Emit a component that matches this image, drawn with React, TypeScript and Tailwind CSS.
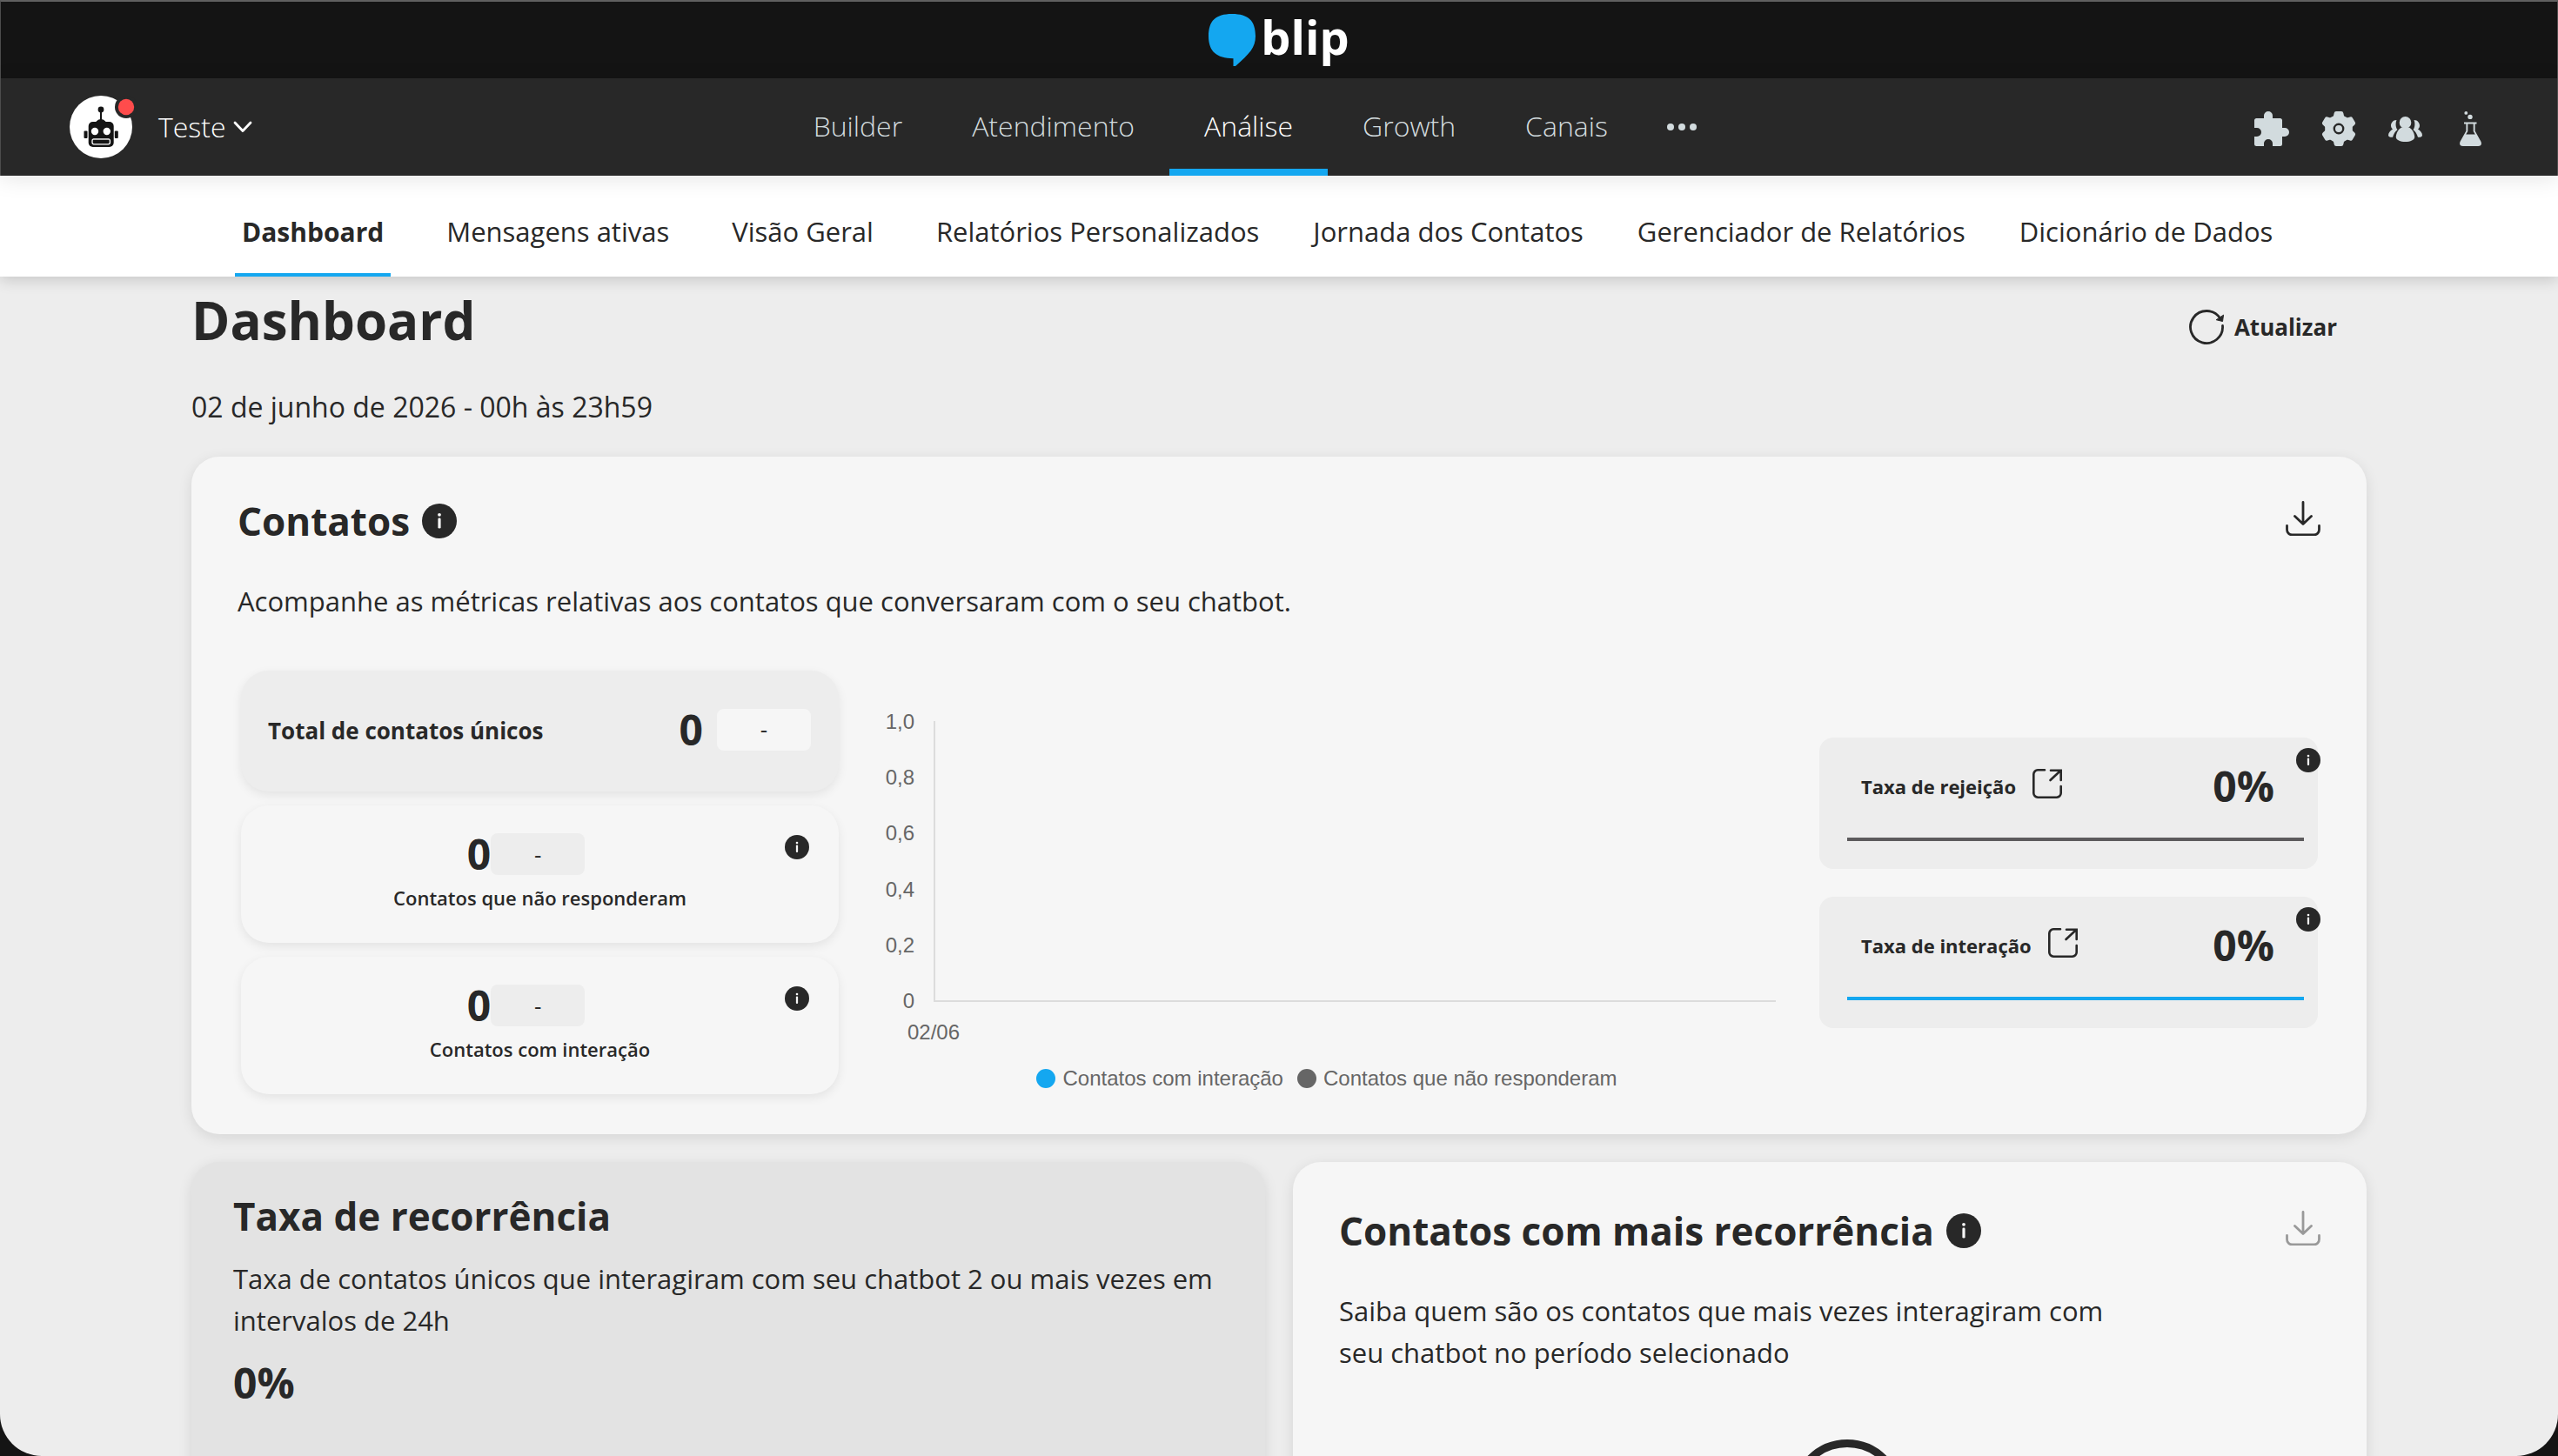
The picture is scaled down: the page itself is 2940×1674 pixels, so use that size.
import { useState } from "react";
import type { ReactNode } from "react";

const sections = ["Builder", "Atendimento", "Análise", "Growth", "Canais"];

const tabs = [
  { label: "Dashboard", space: "mr-2.5" },
  { label: "Mensagens ativas", space: "mr-2.5" },
  { label: "Visão Geral", space: "mr-2.5" },
  { label: "Relatórios Personalizados", space: "" },
  { label: "Jornada dos Contatos", space: "" },
  { label: "Gerenciador de Relatórios", space: "" },
  { label: "Dicionário de Dados", space: "" },
];

const ticks = ["1,0", "0,8", "0,6", "0,4", "0,2", "0"];

function InfoIcon({ className }: { className: string }) {
  return (
    <button aria-label="Informações" className={className}>
      <svg viewBox="0 0 40 40" className="w-full h-full">
        <circle cx="20" cy="20" r="20" fill="#282828" />
        <circle cx="20" cy="12.8" r="1.9" fill="#f6f6f6" />
        <rect x="18.4" y="16.6" width="3.2" height="12" rx="1.4" fill="#f6f6f6" />
      </svg>
    </button>
  );
}

function DownloadIcon({ className }: { className: string }) {
  return (
    <button aria-label="Baixar" className={className}>
      <svg viewBox="0 0 40 40" className="w-full h-full" fill="none" stroke="currentColor" strokeWidth="2.8" strokeLinecap="round" strokeLinejoin="round">
        <path d="M20 1.5V26M10.5 17.5 20 26.5l9.5-9M1.5 28.5v4.5a6 6 0 0 0 6 6h25a6 6 0 0 0 6-6v-4.5" />
      </svg>
    </button>
  );
}

function ExternalIcon() {
  return (
    <svg viewBox="0 0 34 34" className="w-[34px] h-[34px]" fill="none" stroke="#282828" strokeWidth="2.6" strokeLinecap="round">
      <path d="M14 1.3H6.5A5 5 0 0 0 1.3 6.5v21a5 5 0 0 0 5.2 5.2h21a5 5 0 0 0 5.2-5.2V20" />
      <path d="M21 1.8h11.7V13M32 2.2 20.5 13" />
    </svg>
  );
}

function RobotAvatar() {
  return (
    <svg viewBox="0 0 80 72" className="w-20 h-[72px]">
      <circle cx="36" cy="36" r="36" fill="#fff" />
      <g fill="#141414">
        <circle cx="36" cy="16" r="3.4" />
        <rect x="35" y="17" width="2" height="12" />
        <path d="M29 31c2-1 3-4 7-4s5 3 7 4z" />
        <rect x="21.7" y="30" width="29" height="29" rx="5" />
        <rect x="16.5" y="40.5" width="4" height="8.6" rx="1" />
        <rect x="51.8" y="40.5" width="4" height="8.6" rx="1" />
      </g>
      <circle cx="29" cy="41" r="4.2" fill="#fff" />
      <circle cx="42.8" cy="41" r="4.2" fill="#fff" />
      <rect x="26" y="49.8" width="20.4" height="6" rx="2" fill="#141414" stroke="#fff" strokeWidth="1.3" />
      <path d="M27 50h18.4" stroke="#bdbdbd" strokeWidth="1.4" />
      <circle cx="65" cy="13" r="13" fill="#282828" />
      <circle cx="65" cy="13" r="9.2" fill="#ff4c4c" />
    </svg>
  );
}

function PuzzleIcon() {
  return (
    <svg viewBox="0 0 40 40" className="w-10 h-10" fill="currentColor">
      <path d="M2.5 8H11V5a5 5 0 0 1 10 0v3h8.5Q32 8 32 10.5V19h3a5 5 0 0 1 0 10h-3v8.5Q32 40 29.5 40H21v-3a5 5 0 0 0-10 0v3H2.5Q0 40 0 37.5V29h3a5 5 0 0 0 0-10H0v-8.5Q0 8 2.5 8Z" />
    </svg>
  );
}

function GearIcon() {
  return (
    <svg viewBox="0 0 40 40" className="w-10 h-10" fill="currentColor">
      <circle cx="20" cy="20" r="15.8" />
      {[0, 60, 120, 180, 240, 300].map((a) => (
        <path key={a} d="M17 0h6q2 0 2.3 2l.8 3.5 2.5 2.5H11.4l2.5-2.5.8-3.5Q15 0 17 0Z" transform={`rotate(${a} 20 20)`} />
      ))}
      <circle cx="20" cy="20" r="5.2" fill="none" stroke="#282828" strokeWidth="2.4" />
    </svg>
  );
}

function PeopleIcon() {
  const side = "M9.5 4C5 4 3 7.5 3 10.5c0 2 1 3.3 2 4C2 16 0 19 0 21.5c0 1.6 2 2.5 5 2.3 1-3.8 3-6.8 5.5-8.6C8 12 8.3 7 9.5 4Z";
  return (
    <svg viewBox="0 0 39 29" className="w-[39px] h-[29px]" fill="currentColor">
      <path d={side} />
      <path d={side} transform="matrix(-1 0 0 1 39 0)" />
      <ellipse cx="19.5" cy="6.9" rx="6.8" ry="6.9" />
      <path d="M15 12.5h9c3.5 2 6.2 7 6.2 11 0 3.6-5 5.5-10.7 5.5S8.8 27.1 8.8 23.5c0-4 2.7-9 6.2-11Z" />
    </svg>
  );
}

function FlaskIcon() {
  return (
    <svg viewBox="0 0 25 40" className="w-[25px] h-10" fill="currentColor">
      <circle cx="7.3" cy="1.9" r="1.9" />
      <circle cx="12" cy="6.4" r="2.7" />
      <path fillRule="evenodd" d="M5 12.6h14.5V14.4H17.6v8l6.7 12.2c1.5 3 .3 5.4-3 5.4H3.7c-3.3 0-4.5-2.4-3-5.4L7.4 22.4v-8H5ZM9.3 14.4v8.6L7.2 26.4h10.6L15.7 23v-8.6Z" />
    </svg>
  );
}

function Card({ className, children }: { className: string; children: ReactNode }) {
  return (
    <section className={`rounded-[32px] shadow-[0_4px_16px_rgba(0,0,0,0.1)] ${className}`}>
      {children}
    </section>
  );
}

function Badge({ className }: { className: string }) {
  return (
    <span className={`w-[108px] h-12 rounded-lg flex items-center justify-center text-[26px] font-medium ${className}`}>
      -
    </span>
  );
}

function Stat({ label }: { label: string }) {
  return (
    <div className="relative h-[158px] pt-8 rounded-[32px] bg-[#f6f6f6] shadow-[0_4px_12px_rgba(0,0,0,0.08)]">
      <div className="flex items-center justify-center pr-8">
        <span className="text-[48px] leading-12 font-bold">0</span>
        <Badge className="bg-[#ededed]" />
      </div>
      <p className="mt-2.5 text-center text-[22px] leading-8 font-semibold">{label}</p>
      <InfoIcon className="absolute top-[34px] right-[34px] w-7 h-7" />
    </div>
  );
}

function Rate({ label, line }: { label: string; line: string }) {
  return (
    <div className="relative pt-7 pb-8 rounded-2xl bg-[#ededed]">
      <div className="flex items-center h-14 pl-12 pr-[50px]">
        <a href="#" className="flex items-start gap-[19px] text-[22px] leading-10 font-bold">
          {label}
          <ExternalIcon />
        </a>
        <span className="ml-auto text-[48px] leading-14 font-bold">0%</span>
      </div>
      <div className={`mt-[31px] ml-8 mr-4 h-1 ${line}`} />
      <InfoIcon className="absolute top-3 -right-[3px] w-7 h-7" />
    </div>
  );
}

export default function App() {
  const [section, setSection] = useState("Análise");
  const [tab, setTab] = useState("Dashboard");

  return (
    <div className="h-screen overflow-hidden bg-[#141414] font-['Open_Sans',sans-serif] text-[#282828]">
      <div className="h-full overflow-hidden rounded-b-[48px] bg-[#ededed]">
        {/* Brand bar */}
        <header className="h-[90px] flex justify-center bg-[#141414] border-t-2 border-x border-t-[#606060] border-x-[#4d4d4d]">
          <a href="#" className="flex items-start gap-1.5 pt-3.5">
            <svg viewBox="0 0 54 60" className="w-[54px] h-[60px]">
              <path d="M27 0C46 0 54 8 54 25.5 54 38.5 47 46 31 60h-2.5v-8.8C9 51 0 43 0 25.5 0 8 8 0 27 0Z" fill="#14a7f0" />
            </svg>
            <span className="text-[54px] leading-13 font-bold text-white">blip</span>
          </a>
        </header>

        {/* Main navigation */}
        <nav className="relative z-20 h-28 flex justify-between pl-[79px] pr-[87px] bg-[#282828] border-x border-[#4d4d4d] text-[32px] font-light shadow-[0_4px_24px_rgba(0,0,0,0.1)]">
          <button className="flex items-center text-white">
            <RobotAvatar />
            <span className="ml-[22px] mr-2">Teste</span>
            <svg viewBox="0 0 22 14" className="w-[22px] h-3.5" fill="none" stroke="currentColor" strokeWidth="2.8" strokeLinecap="round" strokeLinejoin="round">
              <path d="M2 2l9 9.5L20 2" />
            </svg>
          </button>
          <div className="flex">
            {sections.map((s) => (
              <a
                key={s}
                href="#"
                onClick={() => setSection(s)}
                className={`flex items-center px-10 pb-0.5 border-b-8 pt-2 ${
                  section === s ? "border-[#14a7f0] text-white" : "border-transparent text-[#d2dbde]"
                }`}
              >
                {s}
              </a>
            ))}
            <button aria-label="Mais" className="pl-7 pr-9 text-[#d2dbde]">
              <svg viewBox="0 0 34 8" className="w-[34px] h-2" fill="currentColor">
                <circle cx="4" cy="4" r="4" />
                <circle cx="17" cy="4" r="4" />
                <circle cx="30" cy="4" r="4" />
              </svg>
            </button>
          </div>
          <div className="flex items-center gap-[37px] pt-1 text-[#d2dbde]">
            <button aria-label="Extensões"><PuzzleIcon /></button>
            <button aria-label="Configurações"><GearIcon /></button>
            <button aria-label="Equipe"><PeopleIcon /></button>
            <button aria-label="Laboratório" className="ml-1.5"><FlaskIcon /></button>
          </div>
        </nav>

        {/* Analysis tabs */}
        <nav className="relative z-10 h-[116px] flex gap-[46px] pl-[270px] bg-white text-[31px] shadow-[0_4px_16px_rgba(0,0,0,0.16)]">
          {tabs.map((t) => (
            <a
              key={t.label}
              href="#"
              onClick={() => setTab(t.label)}
              className={`flex items-center px-2 pt-4 border-b-4 whitespace-nowrap ${t.space} ${
                tab === t.label ? "border-[#14a7f0] text-[30px] font-bold" : "border-transparent"
              }`}
            >
              {t.label}
            </a>
          ))}
        </nav>

        <main className="px-[220px] pt-2.5">
          <div className="flex items-start justify-between pr-[34px]">
            <h1 className="text-[60px] leading-20 font-bold">Dashboard</h1>
            <button className="mt-2 h-20 flex items-center gap-3 text-[26px] font-bold">
              <svg viewBox="0 0 40 40" className="w-10 h-10" fill="none" stroke="currentColor" strokeWidth="2.8" strokeLinecap="round">
                <path d="M38.5 18.5A18.5 18.5 0 1 1 35.5 9.8" />
                <path d="M39.5 6.5 38.5 13.5 31.5 11.8Z" fill="currentColor" strokeWidth="1" strokeLinejoin="round" />
              </svg>
              Atualizar
            </button>
          </div>
          <p className="mt-7 text-[32px] leading-12">02 de junho de 2026 - 00h às 23h59</p>

          {/* Contacts */}
          <Card className="mt-[33px] px-[53px] py-[46px] bg-[#f6f6f6]">
            <div className="flex items-start justify-between">
              <div className="flex items-center gap-3.5">
                <h2 className="text-[44px] leading-14 font-bold">Contatos</h2>
                <InfoIcon className="w-10 h-10" />
              </div>
              <DownloadIcon className="mt-[5px] w-10 h-10" />
            </div>
            <p className="mt-10 text-[31px] leading-12">
              Acompanhe as métricas relativas aos contatos que conversaram com o seu chatbot.
            </p>

            <div className="mt-14 flex pl-1 pr-[3px]">
              <div className="w-[687px] flex flex-col gap-4">
                <div className="h-[139px] flex items-center pl-[31px] pr-8 pb-1 rounded-[32px] bg-[#ededed] shadow-[0_4px_12px_rgba(0,0,0,0.08)]">
                  <span className="pt-1 text-[26px] font-bold">Total de contatos únicos</span>
                  <span className="ml-auto mr-4 text-[48px] leading-12 font-bold">0</span>
                  <Badge className="bg-[#f6f6f6]" />
                </div>
                <Stat label="Contatos que não responderam" />
                <Stat label="Contatos com interação" />
              </div>

              {/* Chart */}
              <div className="flex-1 ml-[51px] mr-[50px] pt-[47px] font-['Liberation_Sans',sans-serif] text-2xl leading-6 text-[#666]">
                <div className="flex gap-[22px] h-[345px]">
                  <div className="w-9 flex flex-col justify-between text-right">
                    {ticks.map((t) => (
                      <span key={t}>{t}</span>
                    ))}
                  </div>
                  <div className="flex-1 my-[11px] border-l-2 border-b-2 border-[#dcdcdc]" />
                </div>
                <div className="mt-3 ml-7">02/06</div>
                <div className="mt-[29px] pr-1.5 flex justify-center gap-4">
                  <span className="flex items-center gap-2">
                    <i className="w-[22px] h-[22px] rounded-full bg-[#14a7f0]" />
                    Contatos com interação
                  </span>
                  <span className="flex items-center gap-2">
                    <i className="w-[22px] h-[22px] rounded-full bg-[#666]" />
                    Contatos que não responderam
                  </span>
                </div>
              </div>

              <div className="w-[573px] pt-[77px] flex flex-col gap-8">
                <Rate label="Taxa de rejeição" line="bg-[#5c5a5c]" />
                <Rate label="Taxa de interação" line="bg-[#14a7f0]" />
              </div>
            </div>
          </Card>

          {/* Recurrence */}
          <div className="mt-8 grid grid-cols-2 gap-8">
            <Card className="px-12 pt-[34px] bg-[#e3e3e3]">
              <h2 className="text-[44px] leading-14 font-bold">Taxa de recorrência</h2>
              <p className="mt-5 text-[31px] leading-12">
                Taxa de contatos únicos que interagiram com seu chatbot 2 ou mais vezes em intervalos de 24h
              </p>
              <p className="mt-5 text-[48px] leading-14 font-bold">0%</p>
            </Card>

            <Card className="px-[53px] pt-[51px] bg-[#f6f6f6]">
              <div className="flex items-start justify-between">
                <div className="flex items-center gap-3.5">
                  <h2 className="text-[44px] leading-14 font-bold">Contatos com mais recorrência</h2>
                  <InfoIcon className="w-10 h-10" />
                </div>
                <DownloadIcon className="mt-[5px] w-10 h-10 text-[#999]" />
              </div>
              <p className="mt-10 max-w-[900px] text-[31px] leading-12">
                Saiba quem são os contatos que mais vezes interagiram com seu chatbot no período selecionado
              </p>
              <div className="mt-[76px] pl-10 flex justify-center">
                <div className="w-32 h-32 rounded-full border-[9px] border-[#282828]" />
              </div>
            </Card>
          </div>
        </main>
      </div>
    </div>
  );
}
